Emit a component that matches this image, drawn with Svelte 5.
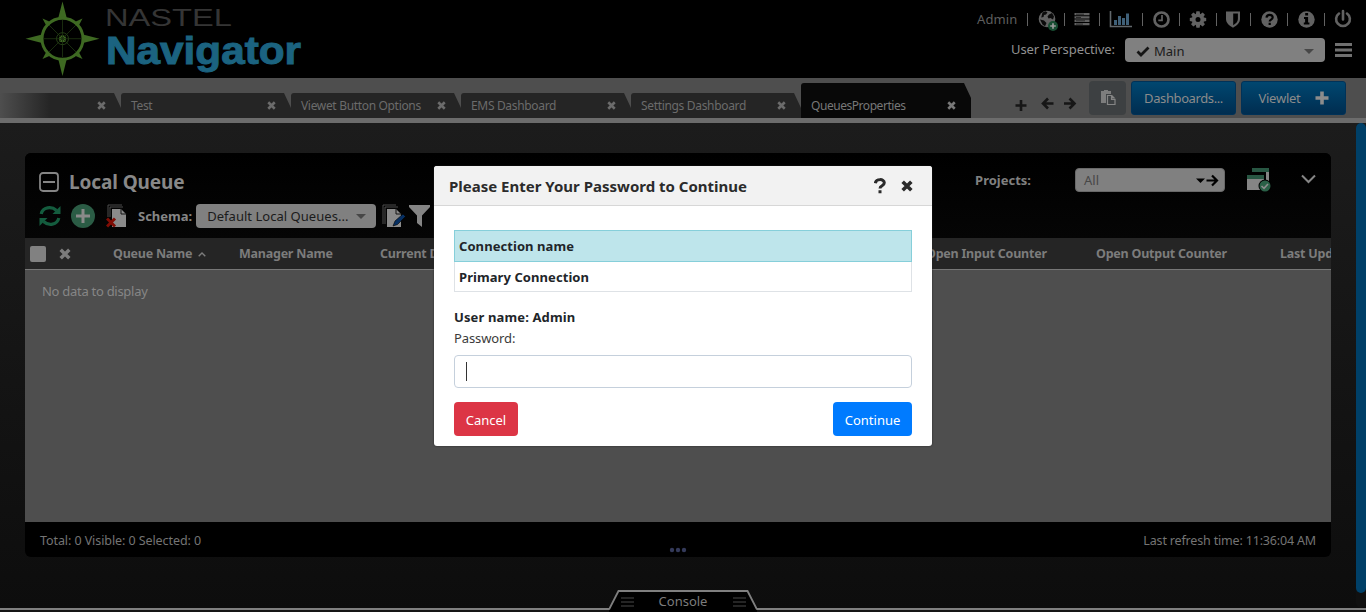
<script>
  const tabs = [
    { name: '', fade: true },
    { name: 'Test' },
    { name: 'Viewet Button Options' },
    { name: 'EMS Dashboard' },
    { name: 'Settings Dashboard' },
    { name: 'QueuesProperties', active: true }
  ];
  const tools = ['globe', 'list', 'chart', 'clock', 'cog', 'shield', 'help', 'info', 'power'];
  const columns = ['Queue Name', 'Manager Name', 'Current Depth', 'Open Input Counter', 'Open Output Counter', 'Last Updated'];
</script>

{#snippet cross(size, w)}
  <svg class="cross" width={size} height={size} viewBox="0 0 10 10" fill="none" stroke="currentColor" stroke-width={w}>
    <path d="M1.4 1.4 8.6 8.6M8.6 1.4 1.4 8.6" />
  </svg>
{/snippet}

{#snippet bars()}
  <svg width="14" height="12" viewBox="0 0 14 12" fill="#242424"><path d="M1 1h13v2H1zM1 5h13v2H1zM1 9h13v2H1z" /></svg>
{/snippet}

{#snippet tool(name)}
  <svg width="24" height="24" viewBox="0 0 24 24" fill="#626262">
    {#if name === 'globe'}
      <circle cx="13" cy="11" r="8.300" />
      <path d="M8.500 4.500l3-1.200 2 1.200-1.500 2-2 .5-.5 2-2.300.5zM15 6.500l3-1.500 2 3.500-1 3-2.500-1.500-2 .5-1-2zM6 11.500l4 1 2.500 2.500-1.500 3.200-2.500-1.700z" fill="#0b0b0b" />
      <circle cx="19" cy="18" r="5" fill="#174d32" />
      <path d="M19 15.200v5.600M16.200 18h5.600" stroke="#9b9b9b" stroke-width="1.700" />
    {:else if name === 'list'}
      <path d="M4.500 5h15v2.300h-15zM4.500 8.300h15v2.300h-15zM4.500 11.600h15v2.300h-15zM4.500 14.900h15v2.300h-15z" />
      <path d="M6 6.200h8M6 9.500h5M6 12.800h9M6 16.100h7" stroke="#111" stroke-width=".7" />
    {:else if name === 'chart'}
      <path d="M1.500 3v15.500H23" fill="none" stroke="#62686c" stroke-width="1.600" />
      <path d="M5 12h3v5H5zM9 8h3v9H9zM13 10h3v7h-3zM17 5.500h3V17h-3z" fill="#3f6078" />
    {:else if name === 'clock'}
      <circle cx="12.500" cy="11.500" r="7" fill="none" stroke="#626262" stroke-width="2.700" />
      <path d="M13 7v5.300H9.300" fill="none" stroke="#626262" stroke-width="1.700" />
    {:else if name === 'cog'}
      <circle cx="12" cy="11.500" r="4.300" fill="none" stroke="#626262" stroke-width="3.600" />
      {#each [0, 45, 90, 135] as angle}
        <path d="M10.400 3.300h3.200l.6 3.200H9.800zM10.400 19.700h3.200l.6-3.200H9.800z" transform="rotate({angle} 12 11.500)" />
      {/each}
    {:else if name === 'shield'}
      <path fill-rule="evenodd" d="M5 3.500h14V11c0 3.800-3 6.500-7 8.700-4-2.200-7-4.900-7-8.700zM12.200 5.500v11.700c2.900-1.800 4.700-3.600 4.700-6.200V5.500z" />
    {:else if name === 'help'}
      <circle cx="12.500" cy="11.500" r="8.200" />
      <path d="M9.500 9.600c.3-3.600 6.200-3.500 6.200-.3 0 2.300-3 2.200-3 4.200M12.700 14.800v2.300" fill="none" stroke="#000" stroke-width="2.200" />
    {:else if name === 'info'}
      <circle cx="12.500" cy="11.500" r="8.200" />
      <path d="M11.200 5h2.900v2.400h-2.900zM10 9h4.100v5.500h1.300v2h-5.600v-2h1.300V11H10z" fill="#000" />
    {:else}
      <path d="M9 5.500a6.900 6.900 0 1 0 8 0M13 3v8.500" fill="none" stroke="#626262" stroke-width="2.600" stroke-linecap="round" />
    {/if}
  </svg>
{/snippet}

<div class="app">
  <header>
    <svg class="logo" width="310" height="78" viewBox="0 0 310 78">
      <g fill="#3e6922" stroke="none">
        <path d="M62.500 1.500 67 19h-9zM62.500 76 67 58h-9zM25.500 38.700 43 34.200v9zM99.500 38.700 82 34.200v9z" />
        <path d="M42.500 18.500l9 4-4.500 4.500zM82.500 18.500l-9 4 4.500 4.500zM42.500 59l9-4-4.500-4.500zM82.500 59l-9-4 4.500-4.500z" />
        <circle cx="62.500" cy="38.700" r="3.500" />
      </g>
      <circle cx="62.500" cy="38.700" r="20.500" fill="none" stroke="#3e6922" stroke-width="3" />
      <path d="M62.500 20v37M44 38.700h37M49 25l27 27M76 25 49 52" stroke="#1c3010" stroke-width=".9" />
      <circle cx="62.500" cy="38.700" r="6" fill="none" stroke="#243d15" />
      <text x="105" y="26.200" font-size="24" textLength="127" lengthAdjust="spacingAndGlyphs" fill="#353535">NASTEL</text>
      <text x="106" y="63.500" font-size="38.500" font-weight="700" textLength="195" lengthAdjust="spacingAndGlyphs" fill="#1b6380" stroke="#1b6380" stroke-width="1">Navigator</text>
    </svg>
    <div class="right">
      <div class="tools">
        <span class="admin">Admin</span>
        {#each tools as name}<span class="cell">{@render tool(name)}</span>{/each}
      </div>
      <div class="perspective">
        <span class="plabel">User Perspective:</span>
        <div class="select main">
          <svg width="14" height="11" viewBox="0 0 14 11"><path d="M1.500 5.500 5 9 12.500 1.500" fill="none" stroke="#151515" stroke-width="2.800" /></svg>
          <span>Main</span><i class="caret"></i>
        </div>
        <svg class="burger" width="17" height="15" viewBox="0 0 17 15" fill="#707070"><path d="M0 0h17v3H0zM0 5.500h17v3H0zM0 11h17v3H0z" /></svg>
      </div>
    </div>
  </header>

  <nav>
    <div class="tabs">
      {#each tabs as tab}
        <div class="tab" class:fade={tab.fade} class:active={tab.active}>
          <span>{tab.name}</span>{@render cross(9, 2.9)}
        </div>
      {/each}
    </div>
    <svg class="arrows" width="64" height="16" viewBox="0 0 64 16" fill="none" stroke="#161616" stroke-width="2.600">
      <path d="M1.500 9.500h11M7 4v11M29 7.500h10.500M34 2.500l-5 5 5 5M50 7.500h10.500M55.500 2.500l5 5-5 5" />
    </svg>
    <button class="paste" aria-label="Paste">
      <svg width="16" height="16" viewBox="0 0 16 16">
        <path d="M1 1h3V0h4v1h3v3H6v9H1z" fill="#7d7d7d" />
        <path d="M7.500 5.500h4v4h3.500v5H7.500z" fill="#3d4042" stroke="#858585" stroke-width="1.200" /><path d="M12 5l3.500 3.500H12z" fill="#858585" />
      </svg>
    </button>
    <button class="blue dash">Dashboards...</button>
    <button class="blue view">Viewlet
      <svg width="14" height="14" viewBox="0 0 14 14"><path d="M7 .5v13M.5 7h13" stroke="#8c8c8c" stroke-width="3.600" /></svg>
    </button>
  </nav>

  <main>
    <section>
      <div class="phead">
        <div class="left">
          <h2>
            <svg width="20" height="20" viewBox="0 0 20 20" fill="none" stroke="#858585" stroke-width="1.800"><rect x="1" y="1" width="18" height="18" rx="3" /><path d="M4 10h12" /></svg>
            <span>Local Queue</span>
          </h2>
          <div class="actions">
            <svg width="22" height="22" viewBox="0 0 22 22" fill="none" stroke="#145c3e" stroke-width="3.200">
              <path d="M2.200 9C3.700 2 12.500.900 17.500 5.500M19.800 13c-1.500 7-10.300 8.100-15.300 3.500" /><path d="M21.500 1v8h-8zM.5 21v-8h8z" fill="#145c3e" stroke="none" />
            </svg>
            <svg class="add" width="24" height="24" viewBox="0 0 24 24"><circle cx="12" cy="12" r="12" fill="#2b5c45" /><path d="M12 5v14M5 12h14" stroke="#8a8a8a" stroke-width="3" /></svg>
            <svg class="docx" width="21" height="24" viewBox="0 0 21 24">
              <path d="M2 13V1h14M4 13V3h13" fill="none" stroke="#555" stroke-width=".9" />
              <path d="M6 5h9l5 5v13H6z" fill="#8b8b8b" /><path d="M15 4.500V10h5.500" fill="none" stroke="#151515" />
              <path d="M1 14.500l8 8M9 14.500l-8 8" stroke="#800d05" stroke-width="3" />
            </svg>
            <b class="schema">Schema:</b>
            <div class="select schemasel"><span>Default Local Queues...</span><i class="caret"></i></div>
            <svg class="docedit" width="24" height="24" viewBox="0 0 24 24">
              <path d="M1 20V1h13M3 20V3h13" fill="none" stroke="#555" stroke-width=".9" />
              <path d="M5 5h9l5 5v13H5z" fill="#8b8b8b" /><path d="M14 4.500V10h5.500" fill="none" stroke="#151515" />
              <path d="M11 22l2-5 8-7 2.500 2.500-8 8z" fill="#062f62" stroke="#000" stroke-width=".6" />
            </svg>
            <svg class="filter" width="21" height="22" viewBox="0 0 21 22"><path d="M0 0h21v2l-8 8.500V22l-5-4v-7.500L0 2z" fill="#858585" /></svg>
          </div>
        </div>
        <div class="projects">
          <b>Projects:</b>
          <div class="select projsel"><span>All</span>
            <svg width="24" height="13" viewBox="0 0 24 13"><path d="M1 4.500h9L5.500 9z" /><path d="M11.500 6.500H22M17 1.500l5 5-5 5" fill="none" stroke="#000" stroke-width="2.200" /></svg>
          </div>
          <svg class="windows" width="24" height="24" viewBox="0 0 24 24">
            <path d="M5 0h17v4H5z" fill="#285743" /><path d="M19 4h3v10h-3z" fill="#858585" />
            <path d="M0 7h17v4H0z" fill="#285743" /><path d="M0 11h17v11H0z" fill="#858585" />
            <circle cx="18" cy="18" r="6.500" /><circle cx="18" cy="18" r="5.500" fill="#2a6047" /><path d="M14.500 18l2.500 2.300 4-4.300" fill="none" stroke="#8c8c8c" stroke-width="1.600" />
          </svg>
          <svg class="chev" width="15" height="10" viewBox="0 0 15 10"><path d="M1 1.500l6.500 6.500L14 1.500" fill="none" stroke="#868686" stroke-width="2" /></svg>
        </div>
      </div>
      <div class="thead">
        <i class="check"></i><span>{@render cross(12, 2.9)}</span>
        {#each columns as col, i}
          <b>{col}{#if i === 0}<svg width="8" height="5" viewBox="0 0 8 5"><path d="M.7 4.300 4 1l3.300 3.300" fill="none" stroke="#7c7c7c" stroke-width="1.400" /></svg>{/if}</b>
        {/each}
      </div>
      <div class="tbody">No data to display</div>
      <div class="tfoot">
        <span class="totals">Total: 0 Visible: 0 Selected: 0</span>
        <svg width="18" height="6" viewBox="0 0 18 6" fill="#343a5a"><circle cx="3" cy="3" r="2.200" /><circle cx="9" cy="3" r="2.200" /><circle cx="15" cy="3" r="2.200" /></svg>
        <span class="refresh">Last refresh time: 11:36:04 AM</span>
      </div>
    </section>
    <div class="scroll"><i></i></div>
  </main>

  <footer>
    <div class="console">
      <svg class="edge" width="148" height="22" viewBox="0 0 148 22"><path d="M0 19.500 9.500 1h129L148 19.500V22H0z" /><path d="M0 19.500 9.500 1h129l9.500 18.500" fill="none" stroke="#7f7f7f" stroke-width="1.800" /></svg>
      {@render bars()}<span>Console</span>{@render bars()}
    </div>
  </footer>

  <div class="modal">
    <div class="mhead">
      <span class="mtitle">Please Enter Your Password to Continue</span>
      <svg class="q" width="12" height="16" viewBox="0 0 12 16" fill="none" stroke="#2b2b2b" stroke-width="3"><path d="M1.300 5.200C2 .500 10.300.500 10.300 4.800c0 3.200-4.300 2.600-4.300 5.700M6 12.200v3" /></svg>
      {@render cross(12, 3)}
    </div>
    <div class="mbody">
      <div class="conn name">Connection name</div>
      <div class="conn">Primary Connection</div>
      <div class="user">User name: Admin</div>
      <div class="pass">Password:</div>
      <div class="field"><i></i></div>
      <div class="buttons"><button class="cancel">Cancel</button><button class="continue">Continue</button></div>
    </div>
  </div>
</div>

<style>
  :global(body) { margin: 0; background: #111; }
  .app { position: relative; width: 1366px; height: 612px; overflow: hidden; display: flex; flex-direction: column; font: 13px/18px "Noto Sans", "Open Sans", sans-serif; color: #7c7c7c; }
  .app * { box-sizing: border-box; }
  svg { display: block; flex: none; }
  button { font: inherit; padding: 0; }
  span, b { white-space: nowrap; }
  header { height: 78px; flex: none; background: #000; display: flex; justify-content: space-between; }
  .logo { font-family: "Liberation Sans", Arial, sans-serif; }
  .tools { display: grid; grid-template-columns: 50px 37px 35px 43px 37px 37px 34px 37px 37px 36px; margin-top: 8px; height: 24px; padding-right: 6px; align-items: center; }
  .admin { color: #5e5e5e; letter-spacing: .1px; margin-top: -3px; }
  .cell { display: flex; justify-content: center; background: linear-gradient(#626262, #626262) 0 5px / 1px 13px no-repeat; }
  .perspective { display: flex; align-items: center; justify-content: flex-end; height: 24px; margin-top: 6px; padding-right: 14px; }
  .plabel { color: #919191; margin: -2px 10px 0 0; letter-spacing: -.1px; }
  .select { display: flex; align-items: center; background: #808080; color: #1b1b1b; border-radius: 4px; height: 24px; }
  .caret { border: 5px solid transparent; border-top: 5px solid #474747; border-bottom: 0; margin-left: auto; }
  .main { width: 200px; padding: 2px 11px 0 11px; gap: 4px; }
  .burger { margin-left: 10px; }
  nav { height: 45px; flex: none; background: #4e4e4e; border-bottom: 5px solid #6c6c6c; display: flex; align-items: flex-start; }
  .tabs { display: flex; align-items: flex-end; height: 40px; width: 971px; justify-content: flex-end; overflow: hidden; }
  .tab { width: 170px; flex: none; height: 25px; background: #252525; color: #6b6b6b; font-size: 12px; letter-spacing: -.33px; display: flex; align-items: center; padding: 0 15px 0 10px; border-top-left-radius: 3px; clip-path: polygon(0 0, 163px 0, 100% 15px, 100% 100%, 0 100%); }
  .tab :global(.cross) { margin-left: auto; }
  .tab.fade { background: linear-gradient(90deg, #4e4e4e 49px, #252525 99px); }
  .tab.active { height: 35px; background: #080808; color: #777; padding-top: 10px; letter-spacing: -.45px; }
  .arrows { margin: 18px 11px 0 43px; }
  .paste { width: 37px; height: 34px; margin: 3px 5px 0 0; border: 0; border-radius: 4px; background: #3d4042; display: grid; place-items: center; }
  .blue { width: 105px; height: 34px; margin: 3px 5px 0 0; border: 1px solid #003258; border-radius: 3px; background: linear-gradient(#004770, #002d50); color: #8b8b8b; display: flex; align-items: center; justify-content: center; letter-spacing: -.4px; }
  .view { gap: 14px; margin-right: 0; letter-spacing: -.25px; }
  main { flex: none; height: 485px; background: linear-gradient(#1c1c1c, #0d0d0d); display: flex; justify-content: space-between; padding-left: 25px; }
  section { width: 1306px; height: 404px; margin-top: 30px; border-radius: 6px; overflow: hidden; background: #000; display: flex; flex-direction: column; }
  .phead { height: 85px; background: linear-gradient(#000, #050505); display: flex; justify-content: space-between; }
  h2 { margin: 18px 0 0 14px; height: 22px; display: flex; align-items: center; gap: 10px; font-size: 19px; font-weight: 700; color: #888; letter-spacing: -.1px; }
  .actions { display: flex; align-items: center; margin: 11px 0 0 14px; height: 24px; color: #868686; }
  .add { margin-left: 10px; }
  .docx { margin-left: 11px; }
  .schema { margin: -1px 0 0 11px; letter-spacing: 0; }
  .schemasel { width: 180px; margin-left: 4px; padding: 0 10px 0 11px; letter-spacing: .03px; }
  .docedit { margin-left: 6px; }
  .filter { margin-left: 3px; }
  .projects { display: flex; align-items: center; height: 24px; margin: 15px 15px 0 0; color: #808080; }
  .projects b { letter-spacing: 0; }
  .projsel { width: 150px; margin-left: 44px; padding: 0 5px 0 8px; justify-content: space-between; color: #474747; border: 1px solid #696969; }
  .windows { margin-left: 22px; }
  .chev { margin: -2px 0 0 30px; }
  .thead { height: 32px; flex: none; background: #252525; border-bottom: 1px solid #777; display: grid; grid-template-columns: 29px 54px 126px 141px 546px 170px 184px 110px; padding-left: 5px; align-items: center; font-size: 12.500px; letter-spacing: -.23px; }
  .thead b { display: flex; align-items: center; gap: 6px; padding-top: 1px; }
  .check { width: 16px; height: 16px; background: #818181; border-radius: 2px; }
  .tbody { flex: 1; background: #4e4e4e; color: #868686; padding: 12px 17px; letter-spacing: -.28px; }
  .tfoot { height: 35px; display: grid; grid-template-columns: 644px 18px 1fr; padding: 2px 15px 0 15px; align-items: center; color: #747474; font-size: 12.500px; }
  .totals { letter-spacing: -.08px; }
  .tfoot svg { align-self: end; margin-bottom: 4px; margin-left: -15px; }
  .refresh { justify-self: end; letter-spacing: -.17px; }
  .scroll { width: 10px; background: #101010; border-radius: 5px; }
  .scroll i { display: block; height: 470px; border-radius: 5px; background: #004068; }
  footer { flex: none; height: 4px; border-top: 2px solid #808080; background: #151515; display: flex; align-items: flex-end; padding-left: 609px; }
  .console { position: relative; width: 148px; height: 22px; flex: none; display: flex; align-items: center; justify-content: space-between; padding: 2px 11px 0 11px; color: #7c7c7c; }
  .edge { position: absolute; left: 0; top: 0; }
  .console > :global(:not(.edge)) { position: relative; }
  .console span { margin-top: -2px; }
  .modal { position: absolute; left: 434px; top: 166px; width: 498px; height: 280px; background: #fff; border-radius: 3px; box-shadow: 0 0 2px #222; color: #212529; overflow: hidden; }
  .mhead { height: 40px; background: #f2f2f2; border-bottom: 1px solid #d7d7d7; display: flex; align-items: center; padding: 1px 19px 0 15px; color: #2b2b2b; }
  .mtitle { font-size: 15px; font-weight: 700; flex: 1; letter-spacing: 0; }
  .q { margin-right: 15px; }
  .mbody { padding: 24px 20px 0; }
  .conn { height: 30px; border: 1px solid #dee2e6; border-top: 0; padding: 0 4px; line-height: 30px; font-weight: 700; letter-spacing: .07px; }
  .conn.name { height: 32px; background: #bee5eb; border: 1px solid #86cfda; }
  .user { font-weight: 700; margin-top: 16px; letter-spacing: .13px; }
  .pass { margin-top: 3px; color: #3b3b3b; letter-spacing: -.1px; }
  .field { height: 33px; margin-top: 8px; border: 1px solid #c5d0dc; border-radius: 4px; padding: 6px 11px; }
  .field i { display: block; width: 1px; height: 19px; background: #333; }
  .buttons { display: flex; justify-content: space-between; margin-top: 14px; }
  .buttons button { height: 34px; border: 0; border-radius: 4px; color: #fff; padding-top: 2px; }
  .cancel { width: 64px; background: #dc3545; }
  .continue { width: 79px; background: #007bff; }
</style>
